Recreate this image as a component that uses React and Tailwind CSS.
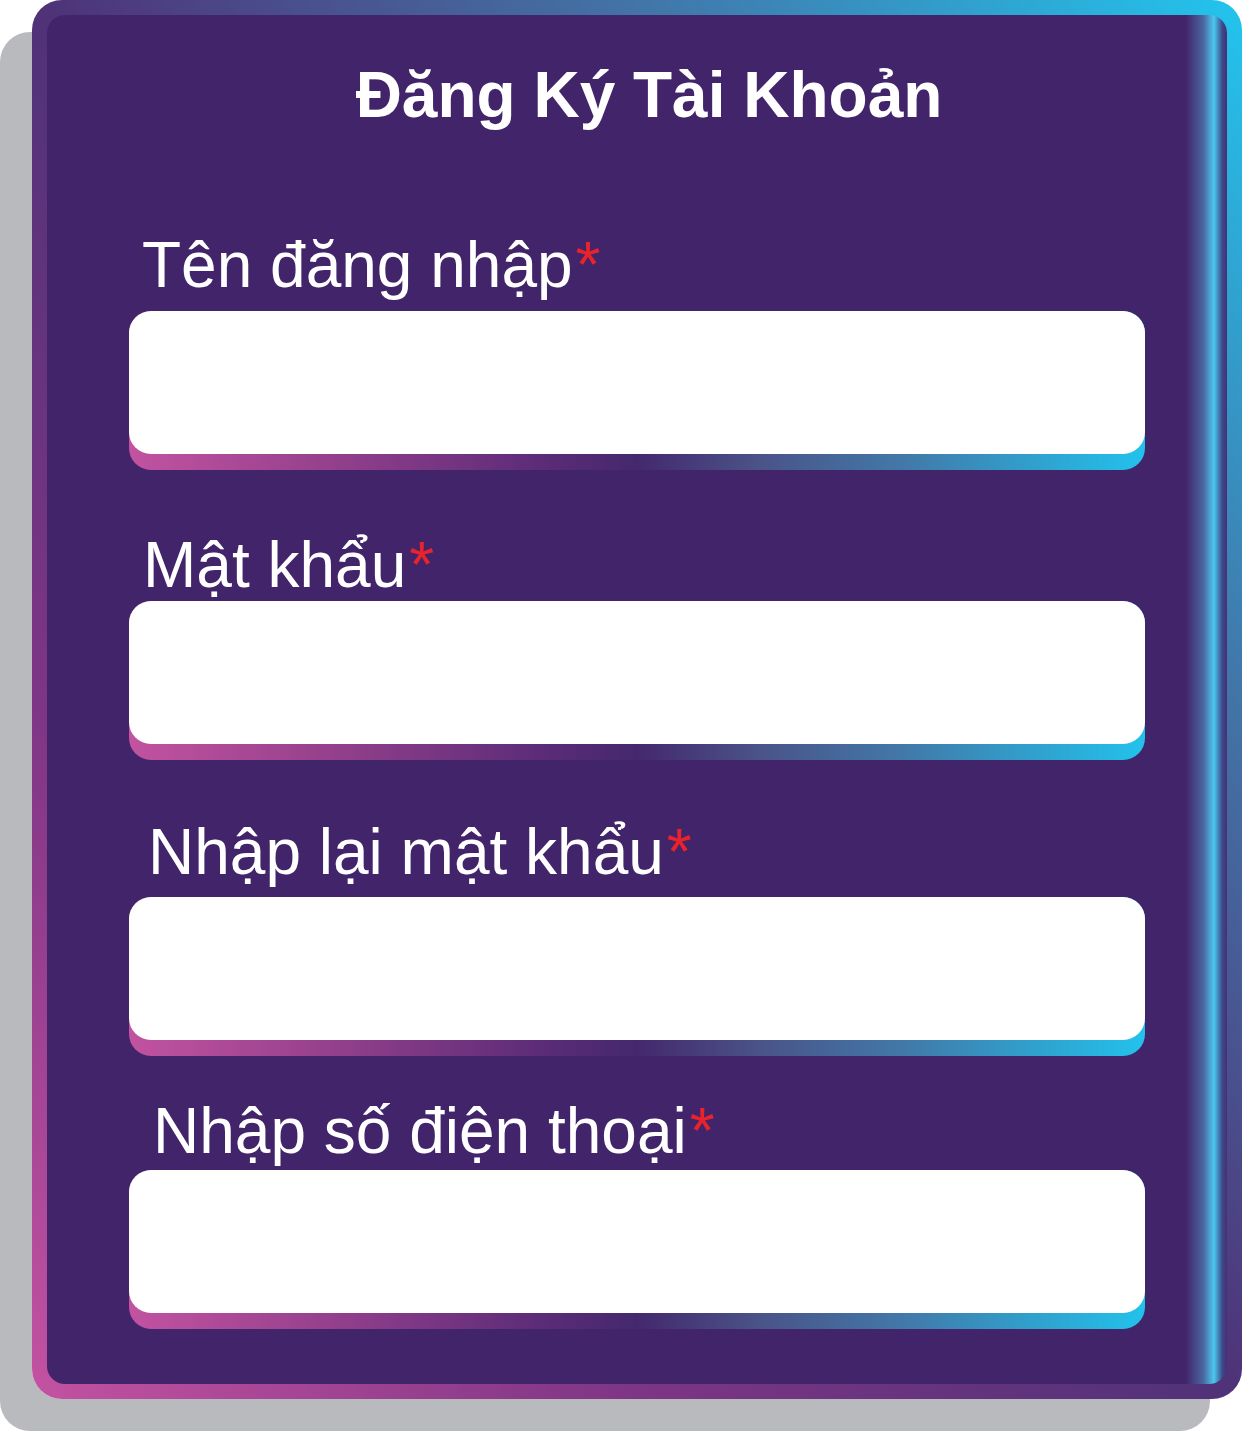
import React from "react";

const fields = [
  { label: "Tên đăng nhập", labelMt: "mt-[106px]", labelPl: "pl-[13px]", gap: "mb-[14px]" },
  { label: "Mật khẩu", labelMt: "mt-[63px]", labelPl: "pl-[14px]", gap: "mb-[4px]" },
  { label: "Nhập lại mật khẩu", labelMt: "mt-[60px]", labelPl: "pl-[19px]", gap: "mb-[13px]" },
  { label: "Nhập số điện thoại", labelMt: "mt-[43px]", labelPl: "pl-[24px]", gap: "mb-[7px]" },
];

function Field({ label, labelMt, labelPl, gap }) {
  return (
    <div className="flex flex-col">
      <label className={`${labelMt} ${labelPl} ${gap} text-[64px] leading-[64px] text-white whitespace-nowrap`}>
        {label}
        <span className="ml-[3px] text-[#e8232b]">*</span>
      </label>
      <div className="h-[159px] rounded-[22px] bg-[linear-gradient(90deg,#c253a1_0%,#94408c_20%,#5d2c78_40%,#44286d_50%,#4a5388_62%,#4278a8_76%,#22c2ec_100%)]">
        <input
          type="text"
          className="block h-[143px] w-full rounded-[22px] bg-white px-6 text-[40px] text-gray-800 outline-none"
        />
      </div>
    </div>
  );
}

export default function App() {
  return (
    <div
      className="w-[1242px] h-[1432px] bg-white overflow-hidden"
      style={{ fontFamily: '"Liberation Sans", Arial, sans-serif' }}
    >
      <div className="ml-[32px] w-[1210px] h-[1399px] rounded-[30px] p-[15px] bg-[linear-gradient(to_top_right,#c452a2_0%,#7e3585_25%,#4f3278_50%,#4275a8_75%,#22c5ee_100%)] shadow-[-32px_32px_0_0_#b9babe]">
        <div className="h-full rounded-[18px] px-[82px] pt-[48px] bg-[linear-gradient(90deg,#42246a_0%,#42246a_96.5%,#4a67a0_98%,#4cc8ef_98.9%,#3b4a8a_99.6%,#4a2d75_100%)]">
          <h1 className="pl-[24px] text-center text-[64px] leading-[64px] font-bold text-white whitespace-nowrap">
            Đăng Ký Tài Khoản
          </h1>
          {fields.map((f) => (
            <Field key={f.label} {...f} />
          ))}
        </div>
      </div>
    </div>
  );
}
